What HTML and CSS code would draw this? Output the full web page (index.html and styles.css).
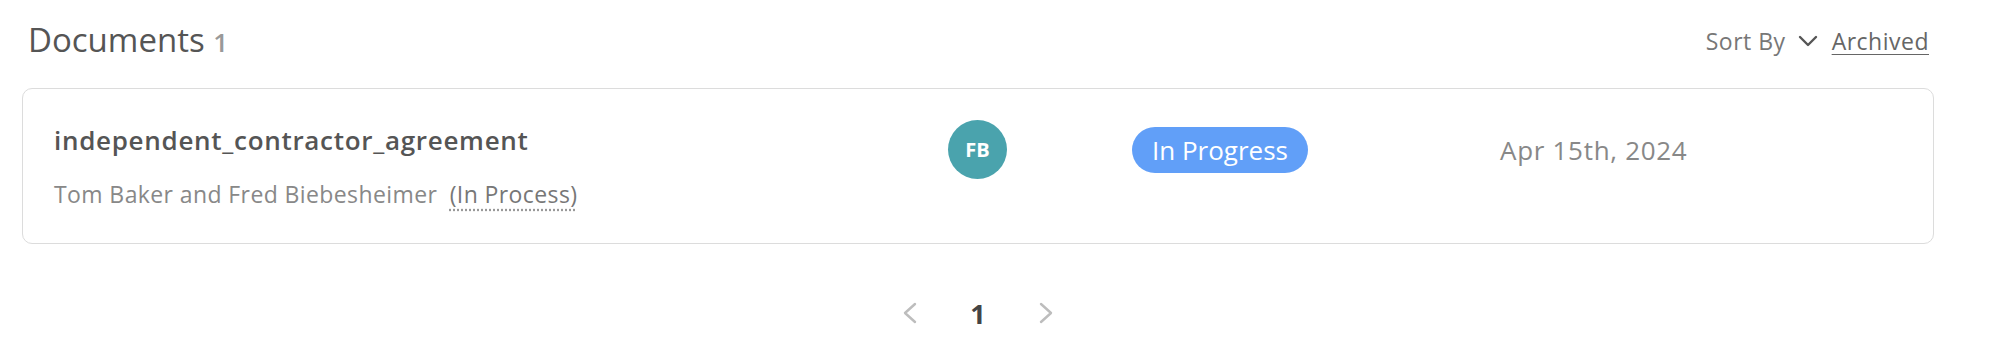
FILE: index.html
```html
<!DOCTYPE html>
<html>
<head>
<meta charset="utf-8">
<link rel="stylesheet" href="styles.css">
</head>
<body>
<div class="page">
  <div class="header">
    <h1 class="title">Documents <span class="count">1</span></h1>
    <div class="tools">
      <span class="sort">Sort By</span>
      <svg class="chev" width="20" height="12" viewBox="0 0 20 12"><path d="M2 2 L10 10 L18 2" fill="none" stroke="#555" stroke-width="2.4" stroke-linecap="round" stroke-linejoin="round"/></svg>
      <a class="archived">Archived</a>
    </div>
  </div>
  <div class="card">
    <div class="doc">
      <div class="doc-name">independent_contractor_agreement</div>
      <div class="doc-sub">Tom Baker and Fred Biebesheimer <span class="proc">(In Process)</span></div>
    </div>
    <div class="avatar">FB</div>
    <div class="status"><span class="badge">In Progress</span></div>
    <div class="date">Apr 15th, 2024</div>
  </div>
  <div class="pager">
    <svg class="pchev" width="16" height="22" viewBox="0 0 16 22"><path d="M13 2 L3 11 L13 20" fill="none" stroke="#bdbdbd" stroke-width="2.4" stroke-linecap="round" stroke-linejoin="round"/></svg>
    <span class="pnum">1</span>
    <svg class="pchev" width="16" height="22" viewBox="0 0 16 22"><path d="M3 2 L13 11 L3 20" fill="none" stroke="#bdbdbd" stroke-width="2.4" stroke-linecap="round" stroke-linejoin="round"/></svg>
  </div>
</div>
</body>
</html>
```
FILE: styles.css
```css
html, body {
  margin: 0;
  padding: 0;
  background: #fff;
}
body {
  font-family: "Open Sans", Lato, sans-serif;
  color: #555;
}
.page {
  width: 1912px;
  margin-left: 22px;
  padding-top: 21px;
}
.header {
  display: flex;
  justify-content: space-between;
  align-items: center;
  height: 40px;
  padding: 0 5px 0 6px;
}
.title {
  margin: 0;
  font-size: 33px;
  font-weight: 500;
  color: #555;
  line-height: 40px;
}
.count {
  color: #999;
  font-size: 26px;
  font-weight: 600;
}
.tools {
  display: flex;
  align-items: center;
  font-size: 23px;
  letter-spacing: 0.5px;
  color: #777;
}
.sort { margin-right: 12px; }
.chev { margin-right: 14px; }
.archived {
  color: #666;
  text-decoration: underline;
  text-underline-offset: 4px;
  text-decoration-thickness: 1px;
}
.card {
  margin-top: 27px;
  border: 1px solid #dcdcdc;
  border-radius: 10px;
  padding: 31px 32px 34px 31px;
  display: grid;
  grid-template-columns: 894px 184px 368px 1fr;
  align-items: start;
}
.doc-name {
  font-size: 26px;
  font-weight: 600;
  letter-spacing: 0.7px;
  color: #555;
  line-height: 40px;
}
.doc-sub {
  margin-top: 19px;
  font-size: 23px;
  letter-spacing: 0.4px;
  line-height: 30px;
  color: #888;
}
.proc {
  margin-left: 6px;
  color: #777;
  text-decoration: underline dotted #999;
  text-underline-offset: 6px;
}
.avatar {
  width: 59px;
  height: 59px;
  border-radius: 50%;
  background: #4aa3ad;
  color: #fff;
  font-weight: 700;
  font-size: 20px;
  display: flex;
  align-items: center;
  justify-content: center;
}
.status { padding-top: 7px; }
.badge {
  display: inline-block;
  background: #619ff8;
  color: #fff;
  font-size: 26px;
  line-height: 46px;
  height: 46px;
  padding: 0 20px;
  border-radius: 23px;
}
.date {
  font-size: 26px;
  letter-spacing: 0.7px;
  line-height: 60px;
  color: #888;
}
.pager {
  margin-top: 49px;
  display: flex;
  justify-content: center;
  align-items: center;
  gap: 52px;
  height: 40px;
}
.pnum {
  font-size: 27px;
  font-weight: 700;
  color: #444;
}
```
